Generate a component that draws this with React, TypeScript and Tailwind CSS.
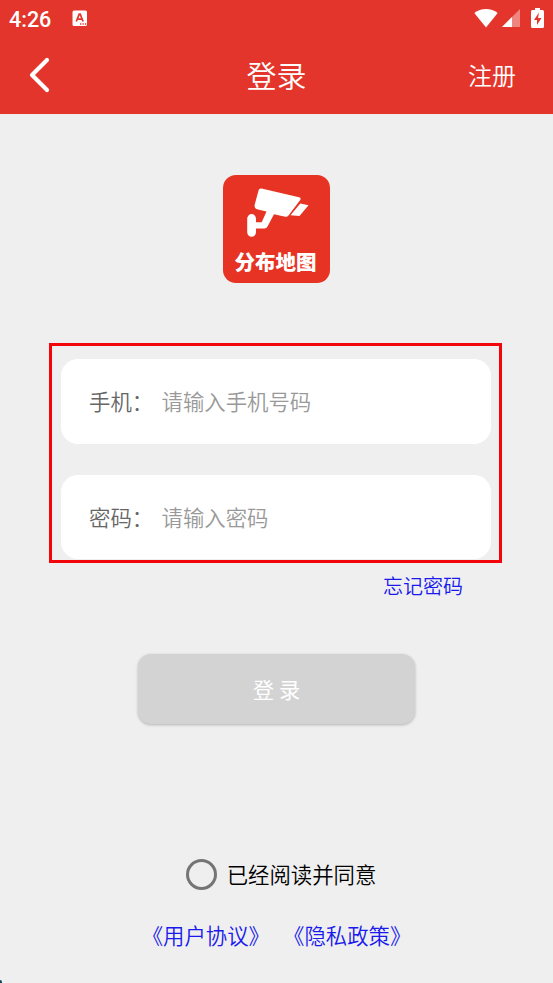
const fields = [
  { label: "手机：", placeholder: "请输入手机号码", type: "tel" },
  { label: "密码：", placeholder: "请输入密码", type: "password" },
];

const agreements = ["《用户协议》", "《隐私政策》"];

function StatusBar() {
  return (
    <div className="flex h-[38px] items-center pl-[9px] pr-[9px]">
      <span className="w-[42px] pt-px font-['Roboto'] text-[21.500px] font-medium leading-none">
        4:26
      </span>
      <svg className="ml-[21px] -mt-[2px] h-4 w-4" viewBox="0 0 16 16">
        <rect x="0.5" y="0.5" width="14.5" height="15.5" rx="1.5" fill="#fff" />
        <path
          d="M4.3 11.5 7.2 4.2h1l2.9 7.3M5.4 9.2h4.6"
          fill="none"
          stroke="#e3352b"
          strokeWidth="1.7"
        />
        <path d="M8 14h1.3M10.5 14h1.3M13 14h1.3" stroke="#e3352b" strokeWidth="1.3" />
      </svg>

      {/* Wifi, signal, battery */}
      <div className="-mt-[2px] ml-auto flex items-center">
        <svg className="h-[19px] w-6" viewBox="0 0 24 19" fill="#fff">
          <path d="M12 18.5 0.3 3.9C3.6 1.4 7.7 0 12 0s8.400 1.400 11.700 3.900z" />
        </svg>
        <svg className="ml-1 h-[18px] w-[18px]" viewBox="0 0 18 18">
          <path d="M0 18 18 0v18z" fill="#fff" fillOpacity="0.4" />
          <path d="M0 18 10 8v10z" fill="#fff" />
        </svg>
        <svg className="ml-[11px] h-5 w-[13px]" viewBox="0 0 13 20">
          <path
            d="M4 0h5v2h2.500q1.500 0 1.500 1.500v15q0 1.500-1.500 1.500h-10q-1.500 0-1.500-1.500v-15q0-1.500 1.500-1.500h2.500z"
            fill="#fff"
          />
          <path d="M8 4.500 3 12h3v5l4.500-7h-3.500z" fill="#e3352b" />
        </svg>
      </div>
    </div>
  );
}

function Logo() {
  return (
    <div className="flex h-[108px] w-[107px] flex-col items-center rounded-[13px] bg-[#e63323]">
      <svg className="h-[72px] w-full" viewBox="0 0 107 72" fill="#fff">
        <path
          d="M38.500 13.500 76 22.300q2.500.7 1.200 2.800L65.500 40.500q-1.300 1.600-3.200 1.200L51 39.300 44.500 51.500q-1 2-3 2H33v3.800a4.400 4.400 0 0 1-8.800 0V43.500a4.400 4.400 0 0 1 8.800 0v3.700h5.700L43.500 36.500l-8.500-2q-4.200-1.200-3.300-4.700L35.500 15.500q.6-2.600 3-2z"
        />
        <path d="M77.300 28.500 85.500 30.300 76.500 41 67.500 40.300z" />
      </svg>
      <span className="-mt-px mr-[2px] font-['Noto_Sans_CJK_SC',sans-serif] text-[20.500px] font-black leading-[30px] text-white">
        分布地图
      </span>
    </div>
  );
}

export default function App() {
  return (
    <div className="relative flex h-[983px] w-[553px] flex-col items-center overflow-hidden bg-[#efefef] font-['Noto_Sans_CJK_SC',sans-serif] font-[350]">
      <header className="h-[113.500px] w-full shrink-0 bg-[#e3352b] text-white">
        <StatusBar />
        <div className="grid h-[73px] grid-cols-3 items-center pl-[29px] pr-[37px]">
          <button aria-label="返回" className="justify-self-start">
            <svg className="h-[36px] w-[22px]" viewBox="0 0 22 36" fill="none">
              <path
                d="M18 3 3 18l15 15"
                stroke="#fff"
                strokeWidth="4.200"
                strokeLinecap="round"
                strokeLinejoin="round"
              />
            </svg>
          </button>
          <h1 className="-mt-[2px] ml-[8px] justify-self-center text-[30px] font-[350] leading-none">
            登录
          </h1>
          <button className="justify-self-end text-[24px] leading-none">注册</button>
        </div>
      </header>

      <div className="mt-[61.500px]">
        <Logo />
      </div>

      {/* Form */}
      <div className="mt-[60px] mr-[2px] flex h-[220px] w-[453px] shrink-0 flex-col gap-[31px] border-3 border-[#f2060a] pl-[9px] pr-[8px] pt-[13px]">
        {fields.map((field) => (
          <label
            key={field.label}
            className="flex h-[84.500px] shrink-0 items-center rounded-[17px] bg-white pl-[28px] text-[21.400px]">
            <span className="w-[72.500px] text-[#666]">{field.label}</span>
            <input
              type={field.type}
              placeholder={field.placeholder}
              className="w-[280px] outline-none placeholder:text-[#999]"
            />
          </label>
        ))}
      </div>

      <a className="mr-[90px] mt-[8px] self-end text-[20px] leading-[30px] text-[#1a1aed]">
        忘记密码
      </a>

      <button className="mt-[53px] h-[70px] w-[277px] shrink-0 rounded-[13px] bg-[#d3d3d3] pb-px text-[21.300px] font-normal text-white shadow-[0_1px_3px_rgba(0,0,0,0.25)]">
        登 录
      </button>

      {/* Agreement */}
      <label className="ml-[9px] mt-[134px] flex items-center gap-[10px] text-[21.400px] leading-[32px] text-black">
        <span className="h-[31px] w-[31px] rounded-full border-3 border-[#757575]" />
        已经阅读并同意
      </label>
      <div className="mt-[29px] flex gap-[13px] text-[21.400px] leading-[32px] text-[#1a1aed]">
        {agreements.map((name) => (
          <a key={name}>{name}</a>
        ))}
      </div>

      <span className="absolute bottom-0 left-0 h-[3px] w-[2px] rounded-tr-full bg-[#0d4a5c]" />
    </div>
  );
}
